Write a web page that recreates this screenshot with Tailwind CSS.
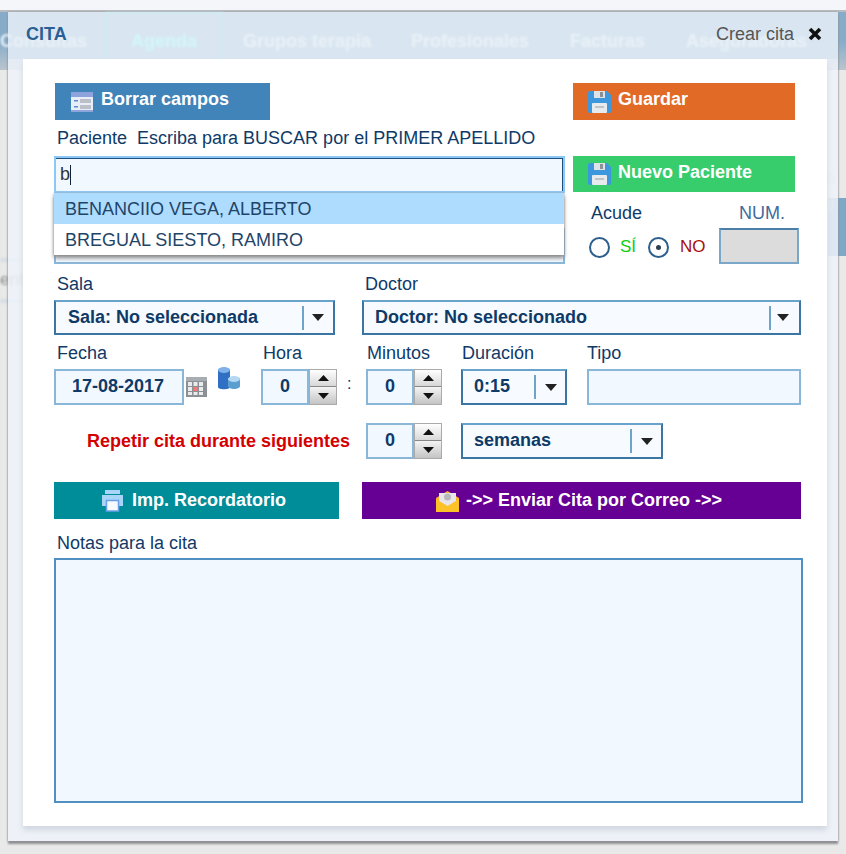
<!DOCTYPE html>
<html lang="es"><head><meta charset="utf-8"><title>Cita</title>
<script src="https://cdn.jsdelivr.net/npm/@tailwindcss/browser@4"></script></head>
<body class="m-0 bg-[#e9e9e9]">
<div class="relative w-[846px] h-[854px] overflow-hidden bg-[#e9e9e9] font-['Liberation_Sans',sans-serif] text-[#0f3a68]">
  <!-- blurred page behind -->
  <div class="absolute inset-0">
    <div class="h-[10px] bg-[#f4f6fa]"></div>
    <div class="h-[2px] bg-[#b9bdc0]"></div>
    <div class="h-[58px] bg-gradient-to-b from-[#86acca] via-[#86acca] to-[#b9c4cd]"></div>
    <div class="absolute left-0 top-[258px] w-[30px] h-[45px] border-y-4 border-[#d6dde4] blur-[1px] text-[17px] leading-[36px] text-[#8c8c8c]">ent</div>
    <div class="absolute left-[828px] top-[198px] w-[18px] h-[58px] bg-[#7fa7c6] blur-[0.5px]"></div>
    <div class="absolute left-[826px] top-[166px] text-[17px] text-[#b9c2d2] blur-[1px]">o s</div>
  </div>
  <!-- dialog -->
  <div class="absolute left-[8px] top-[12px] w-[830px] h-[829px] bg-[#eef3fa]/85 shadow-[0_3px_2px_#8e9092,0_0_2px_#9a9a9a]">
    <div class="absolute left-0 top-0 w-full h-[47px] bg-[#d9e6f1]"></div>
    <!-- page navigation, blurred through the dialog header -->
    <div class="absolute left-0 top-[18px] w-full h-[24px] text-[18px] leading-[22px] font-bold text-[#eaf1f7] blur-[1.2px] whitespace-nowrap flex">
      <span class="w-[123px] -indent-[8px]">Consultas</span><span class="w-[112px] text-[#d2f6fb]">Agenda</span><span class="w-[168px]">Grupos terapia</span><span class="w-[159px]">Profesionales</span><span class="w-[116px]">Facturas</span><span>Aseguradoras</span>
    </div>
    <div class="absolute left-[98px] top-0 w-[117px] h-[47px] border-x border-t border-[#c0f0f6]/80 blur-[0.8px]"></div>
    <div class="absolute left-[18px] top-[13px] text-[18px] leading-[18px] font-bold text-[#2a5f95]">CITA</div>
    <div class="absolute left-[708px] top-[13px] text-[18px] leading-[18px] text-[#555]">Crear cita</div>
    <svg class="absolute left-[800px] top-[15px]" width="14" height="14" viewBox="0 0 14 14"><path d="M2 2L12 12M12 2L2 12" stroke="#111" stroke-width="3.6"/></svg>

    <!-- white panel -->
    <div class="absolute left-[15px] top-[47px] w-[804px] h-[767px] bg-white shadow-[0_4px_6px_#cfd5de] pl-[31px] pt-[24px] text-[18px]">
      <!-- row 1 -->
      <div class="flex h-[37px]">
        <button class="ml-[1px] w-[215px] h-[37px] bg-[#4084b9] text-white font-bold text-[18px] flex items-center pl-[16px] gap-[8px]">
          <svg width="22" height="20" viewBox="0 0 22 20"><rect x="0" y="0" width="22" height="20" rx="1" fill="#e8eef8"/><rect x="0" y="0" width="22" height="5" fill="#8ea3dc"/><rect x="0" y="18" width="22" height="2" fill="#8ea6dc"/><rect x="9" y="7" width="11" height="4" fill="#bcbfc7"/><rect x="9" y="13" width="11" height="4" fill="#bcbfc7"/><rect x="3" y="8" width="4" height="1.5" fill="#5a8ad6"/><rect x="3" y="14" width="4" height="1.5" fill="#5a8ad6"/></svg>
          <span class="-translate-y-[2px]">Borrar campos</span></button>
        <button class="ml-[303px] w-[222px] h-[37px] bg-[#e16b26] text-white font-bold text-[18px] flex items-center pl-[15px] gap-[7px]">
          <svg width="23" height="22" viewBox="0 0 23 22"><path d="M2 0H19L23 4V20Q23 22 21 22H2Q0 22 0 20V2Q0 0 2 0Z" fill="#3d97dc"/><rect x="6" y="0" width="11" height="7" fill="#dfe3e8"/><rect x="12" y="1" width="3" height="5" fill="#8a9097"/><rect x="4" y="12" width="15" height="10" rx="1" fill="#e8ebee"/><rect x="7" y="15" width="9" height="2" fill="#c0c4c8"/></svg>
          <span class="-translate-y-[2px]">Guardar</span></button>
      </div>
      <!-- row 2 -->
      <div class="mt-[9px] ml-[3px] h-[18px] leading-[18px] whitespace-pre">Paciente  Escriba para BUSCAR por el PRIMER APELLIDO</div>
      <!-- row 3 -->
      <div class="mt-[9px] flex gap-[8px] relative">
        <div class="w-[511px]">
          <div class="h-[37px] border-2 border-[#8cc8f6] shadow-[inset_0_1px_0_#1f4f7e,inset_-1px_0_0_#1f4f7e] bg-[#f2f8ff] flex items-center pl-[4px] text-[18px] text-[#333]">b<span class="w-px h-[20px] bg-[#123]"></span></div>
          <div class="mt-[35px] h-[36px] border-2 border-[#8ab6d8] bg-[#f2f8ff]"></div>
          <div class="absolute left-0 top-[37px] w-[510px] h-[62px] bg-white shadow-[0_3px_4px_#888,0_0_2px_#aaa] text-[#1f4468] text-[18px] leading-[32px]">
            <div class="h-[31px] bg-[#aedcff] pl-[11px]">BENANCIIO VEGA, ALBERTO</div>
            <div class="h-[31px] pl-[11px]">BREGUAL SIESTO, RAMIRO</div>
          </div>
        </div>
        <div class="w-[230px] pt-0">
          <button class="w-[222px] h-[36px] bg-[#38cd6c] text-white font-bold text-[18px] flex items-center pl-[15px] gap-[7px]">
            <svg width="23" height="22" viewBox="0 0 23 22"><path d="M2 0H19L23 4V20Q23 22 21 22H2Q0 22 0 20V2Q0 0 2 0Z" fill="#3d97dc"/><rect x="6" y="0" width="11" height="7" fill="#dfe3e8"/><rect x="12" y="1" width="3" height="5" fill="#8a9097"/><rect x="4" y="12" width="15" height="10" rx="1" fill="#e8ebee"/><rect x="7" y="15" width="9" height="2" fill="#c0c4c8"/></svg>
            <span class="-translate-y-[2px]">Nuevo Paciente</span></button>
          <div class="flex mt-[3px] h-[72px]">
            <div class="w-[146px] pl-[18px]">
              <div class="h-[18px] mt-[10px] leading-[16px]">Acude</div>
              <div class="flex items-center mt-[12px]">
                <span class="-ml-[2px] w-[21px] h-[21px] rounded-full border-2 border-[#2d5f8c] bg-white"></span>
                <span class="ml-[10px] text-[#0fd00f] w-[28px] -translate-y-[1px] text-[17px]">SÍ</span>
                <span class="w-[21px] h-[21px] rounded-full border-2 border-[#2d5f8c] bg-white flex items-center justify-center"><span class="w-[5px] h-[5px] rounded-full bg-[#2f3f52]"></span></span>
                <span class="ml-[11px] text-[#a80d0d] -translate-y-[1px] text-[17px]">NO</span>
              </div>
            </div>
            <div class="w-[80px]">
              <div class="h-[18px] mt-[10px] leading-[16px] text-center text-[#3f6c9c] pl-[6px] whitespace-nowrap">NUM.</div>
              <div class="mt-[5px] h-[36px] bg-[#dcdcdc] border-2 border-[#7aa6c8] border-t-[#4b7ea8]"></div>
            </div>
          </div>
        </div>
      </div>
      <!-- sala/doctor -->
      <div class="flex mt-[9px]">
        <div class="w-[308px]">
          <div class="ml-[3px] h-[18px] leading-[16px]">Sala</div>
          <div class="mt-[6px] w-[281px] h-[35px] border-2 border-[#3b75a3] border-t-[#69a3cc] bg-[#f7fbff] flex items-center pl-[12px] font-bold">
            <span class="w-[236px] h-[24px] leading-[22px] border-r-2 border-[#6ea4ca] whitespace-nowrap">Sala: No seleccionada</span>
            <svg class="ml-[8px]" width="12" height="7" viewBox="0 0 12 7"><path d="M0 0H12L6 7Z" fill="#222"/></svg>
          </div>
        </div>
        <div class="w-[439px]">
          <div class="ml-[3px] h-[18px] leading-[16px]">Doctor</div>
          <div class="mt-[6px] w-[439px] h-[35px] border-2 border-[#3b75a3] border-t-[#69a3cc] bg-[#f7fbff] flex items-center pl-[11px] font-bold">
            <span class="w-[396px] h-[24px] leading-[22px] border-r-2 border-[#6ea4ca] whitespace-nowrap">Doctor: No seleccionado</span>
            <svg class="ml-[6px]" width="12" height="7" viewBox="0 0 12 7"><path d="M0 0H12L6 7Z" fill="#222"/></svg>
          </div>
        </div>
      </div>
      <!-- fecha row -->
      <div class="flex mt-[10px]">
        <div class="w-[207px]">
          <div class="ml-[3px] h-[18px] leading-[16px]">Fecha</div>
          <div class="mt-[6px] flex relative">
            <div class="w-[130px] h-[36px] border-2 border-[#8ab6d8] bg-[#f2f8ff] font-bold flex items-center justify-center pb-[2px] pr-[2px]">17-08-2017</div>
            <svg class="mt-[8px] ml-[2px]" width="21" height="20" viewBox="0 0 21 20"><rect width="21" height="20" fill="#8b9094"/><rect y="0" width="21" height="4" fill="#a8adb1"/><path d="M2 5h4v4H2zM7.500 5h4v4h-4zM13 5h4v4h-4zM2 10h4v4H2zM13 10h4v4h-4zM2 15h4v3H2zM7.500 15h4v3h-4zM13 15h4v3h-4z" fill="#e9ebec"/><path d="M7.500 10h4v4h-4z" fill="#f47a7a"/></svg>
            <svg class="absolute left-[163px] -top-[3px] blur-[0.4px]" width="24" height="25" viewBox="0 0 24 25"><path d="M1 4C1 1 13 1 13 4V21C13 24 1 24 1 21Z" fill="#2f6fc4"/><ellipse cx="7" cy="4" rx="6" ry="3" fill="#7fb2ea"/><path d="M11 13C11 10 23 10 23 13V20C23 24 11 24 11 20Z" fill="#5a9fd0"/><ellipse cx="17" cy="13" rx="6" ry="3" fill="#b4d8f2"/></svg>
          </div>
        </div>
        <div class="w-[105px]">
          <div class="ml-[2px] h-[18px] leading-[16px]">Hora</div>
          <div class="mt-[6px] flex items-start">
            <div class="w-[48px] h-[36px] border-2 border-[#8ab6d8] bg-[#f2f8ff] font-bold flex items-center justify-center pb-[2px]">0</div>
            <div class="w-[28px] h-[36px] flex flex-col border border-[#aaa]">
              <div class="h-[17px] bg-gradient-to-b from-white to-[#d8d8d8] border-b border-[#888] flex items-center justify-center"><svg width="11" height="6" viewBox="0 0 11 6"><path d="M0 6H11L5.5 0Z" fill="#111"/></svg></div>
              <div class="flex-1 bg-gradient-to-b from-[#f4f4f4] to-[#c4c4c4] flex items-center justify-center"><svg width="11" height="6" viewBox="0 0 11 6"><path d="M0 0H11L5.5 6Z" fill="#111"/></svg></div>
            </div>
            <span class="ml-[10px] mt-[3px] text-[16px]">:</span>
          </div>
        </div>
        <div class="w-[95px]">
          <div class="ml-[1px] h-[18px] leading-[16px]">Minutos</div>
          <div class="mt-[6px] flex">
            <div class="w-[48px] h-[36px] border-2 border-[#8ab6d8] bg-[#f2f8ff] font-bold flex items-center justify-center pb-[2px]">0</div>
            <div class="w-[28px] h-[36px] flex flex-col border border-[#aaa]">
              <div class="h-[17px] bg-gradient-to-b from-white to-[#d8d8d8] border-b border-[#888] flex items-center justify-center"><svg width="11" height="6" viewBox="0 0 11 6"><path d="M0 6H11L5.5 0Z" fill="#111"/></svg></div>
              <div class="flex-1 bg-gradient-to-b from-[#f4f4f4] to-[#c4c4c4] flex items-center justify-center"><svg width="11" height="6" viewBox="0 0 11 6"><path d="M0 0H11L5.5 6Z" fill="#111"/></svg></div>
            </div>
          </div>
        </div>
        <div class="w-[126px]">
          <div class="ml-[1px] h-[18px] leading-[16px]">Duración</div>
          <div class="mt-[6px] w-[106px] h-[36px] border-2 border-[#3b75a3] border-t-[#69a3cc] bg-[#f7fbff] flex items-center pl-[11px] font-bold">
            <span class="w-[62px] h-[24px] leading-[22px] border-r-2 border-[#6ea4ca]">0:15</span>
            <svg class="ml-[9px]" width="12" height="7" viewBox="0 0 12 7"><path d="M0 0H12L6 7Z" fill="#222"/></svg>
          </div>
        </div>
        <div class="w-[214px]">
          <div class="h-[18px] leading-[16px]">Tipo</div>
          <div class="mt-[6px] h-[36px] border-2 border-[#8ab6d8] bg-[#f2f8ff]"></div>
        </div>
      </div>
      <!-- repeat row -->
      <div class="flex mt-[18px] items-start">
        <div class="w-[296px] text-right pt-[9px] leading-[18px] font-bold text-[#d40000] whitespace-nowrap">Repetir cita durante siguientes</div>
        <div class="ml-[16px] w-[95px] flex">
          <div class="w-[48px] h-[36px] border-2 border-[#8ab6d8] bg-[#f2f8ff] font-bold flex items-center justify-center pb-[2px]">0</div>
          <div class="w-[28px] h-[36px] flex flex-col border border-[#aaa]">
            <div class="h-[17px] bg-gradient-to-b from-white to-[#d8d8d8] border-b border-[#888] flex items-center justify-center"><svg width="11" height="6" viewBox="0 0 11 6"><path d="M0 6H11L5.5 0Z" fill="#111"/></svg></div>
            <div class="flex-1 bg-gradient-to-b from-[#f4f4f4] to-[#c4c4c4] flex items-center justify-center"><svg width="11" height="6" viewBox="0 0 11 6"><path d="M0 0H11L5.5 6Z" fill="#111"/></svg></div>
          </div>
        </div>
        <div class="w-[202px] h-[36px] border-2 border-[#3b75a3] border-t-[#69a3cc] bg-[#f7fbff] flex items-center pl-[11px] font-bold">
          <span class="w-[158px] h-[24px] leading-[22px] border-r-2 border-[#6ea4ca]">semanas</span>
          <svg class="ml-[9px]" width="12" height="7" viewBox="0 0 12 7"><path d="M0 0H12L6 7Z" fill="#222"/></svg>
        </div>
      </div>
      <!-- action buttons -->
      <div class="flex mt-[23px] gap-[23px]">
        <button class="w-[285px] h-[37px] bg-[#008d9a] text-white font-bold text-[18px] flex items-center justify-center gap-[8px] pr-[6px]">
          <svg width="23" height="23" viewBox="0 0 23 23"><path d="M4 1H19V5H4Z" fill="#a8d4f7"/><path d="M1 6H22V17H18V13H5V17H1Z" fill="#a8d4f7"/><rect x="5.500" y="11.500" width="12" height="10.500" fill="#f8fbfe" stroke="#6aa0e8" stroke-width="1.5"/></svg>
          <span>Imp. Recordatorio</span></button>
        <button class="w-[439px] h-[37px] bg-[#660094] text-white font-bold text-[18px] flex items-center justify-center gap-[6px] pr-[6px]">
          <svg width="25" height="22" viewBox="0 0 25 22"><path d="M1 8L12.500 1L24 8V22H1Z" fill="#f9b42a"/><path d="M4 3H21V13L12.500 17L4 13Z" fill="#e8e6ea"/><circle cx="12.500" cy="7" r="3.500" fill="#b8b8bc"/><path d="M1 9L12.500 16L24 9V22H1Z" fill="#fcc227"/></svg>
          <span>-&gt;&gt; Enviar Cita por Correo -&gt;&gt;</span></button>
      </div>
      <div class="mt-[16px] ml-[3px] h-[18px] leading-[16px]">Notas para la cita</div>
      <div class="mt-[5px] w-[749px] h-[245px] border-2 border-[#4f8fc2] bg-[#f2f8ff]"></div>
    </div>
  </div>
</div>
</body></html>
